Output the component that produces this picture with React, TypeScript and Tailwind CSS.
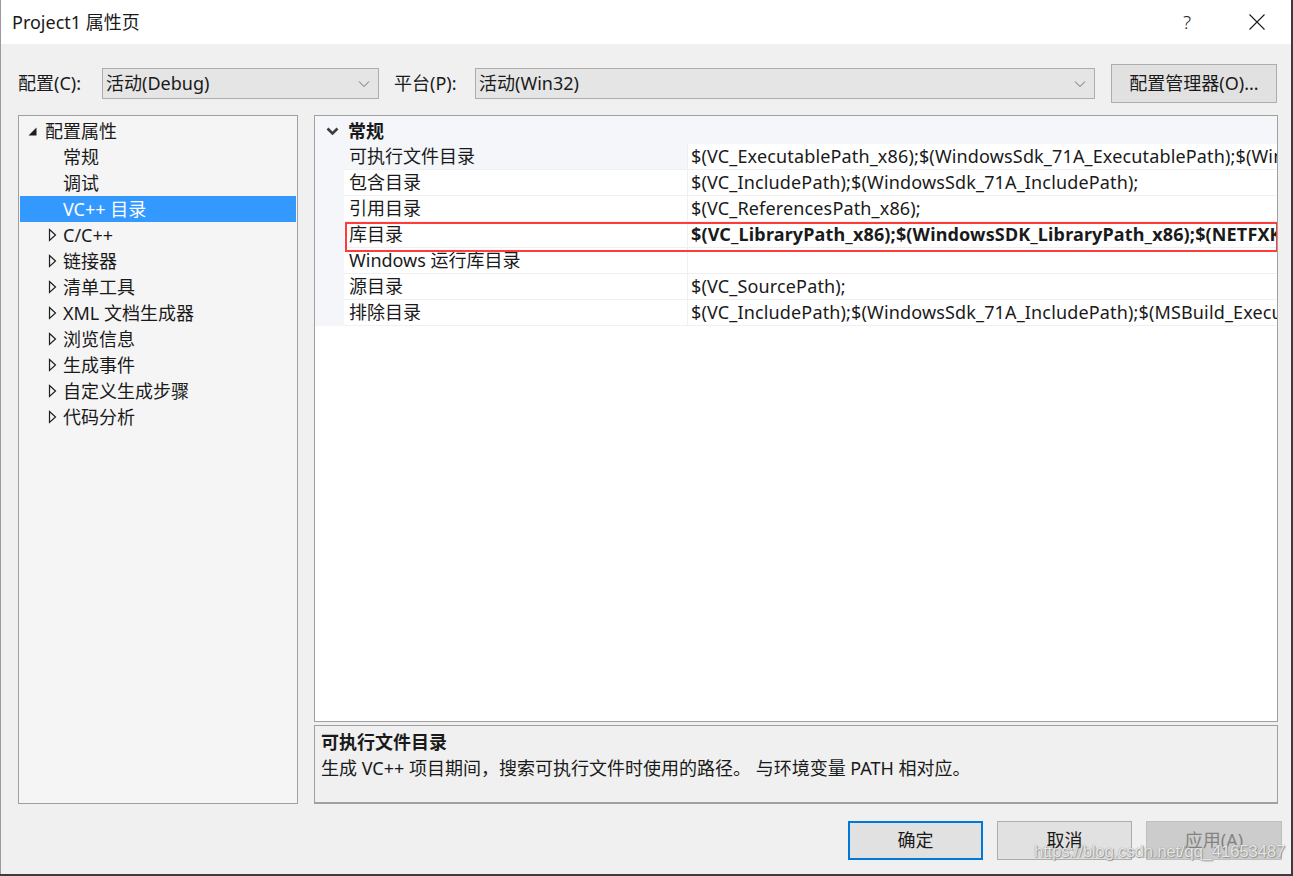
import React from 'react';

const font = { fontFamily: '"Noto Sans", "Noto Sans CJK SC", sans-serif' };

const Chevron = () => (
  <svg width="12" height="8" viewBox="0 0 12 8" className="text-[#6b6b6b]">
    <path d="M1 1.5 L6 6.5 L11 1.5" fill="none" stroke="currentColor" strokeWidth="1" />
  </svg>
);

const Caret = () => (
  <svg width="9" height="14" viewBox="0 0 9 14" className="shrink-0">
    <path d="M1.5 1.5 L7.5 7 L1.5 12.5 Z" fill="none" stroke="#1e1e1e" strokeWidth="1.2" />
  </svg>
);

const treeItems = [
  { label: '常规', caret: false },
  { label: '调试', caret: false },
  { label: 'VC++ 目录', caret: false, active: true },
  { label: 'C/C++', caret: true },
  { label: '链接器', caret: true },
  { label: '清单工具', caret: true },
  { label: 'XML 文档生成器', caret: true },
  { label: '浏览信息', caret: true },
  { label: '生成事件', caret: true },
  { label: '自定义生成步骤', caret: true },
  { label: '代码分析', caret: true },
];

const rows = [
  { name: '可执行文件目录', value: '$(VC_ExecutablePath_x86);$(WindowsSdk_71A_ExecutablePath);$(WindowsSdk_71A_ExecutablePath_x64);$(WindowsSDK_ExecutablePath);$(VS_ExecutablePath);$(MSBuild_ExecutablePath);$(SystemRoot)', selected: true },
  { name: '包含目录', value: '$(VC_IncludePath);$(WindowsSdk_71A_IncludePath);' },
  { name: '引用目录', value: '$(VC_ReferencesPath_x86);' },
  { name: '库目录', value: '$(VC_LibraryPath_x86);$(WindowsSDK_LibraryPath_x86);$(NETFXKitsDir)Lib\\um\\x86', bold: true },
  { name: 'Windows 运行库目录', value: '' },
  { name: '源目录', value: '$(VC_SourcePath);' },
  { name: '排除目录', value: '$(VC_IncludePath);$(WindowsSdk_71A_IncludePath);$(MSBuild_ExecutablePath);$(VC_LibraryPath_x86);' },
];

export default function App() {
  return (
    <div className="w-[1293px] h-[876px] bg-[#3c3c3c] overflow-hidden text-[#1a1a1a]" style={font}>
      <div className="relative w-[1291px] h-[874px] bg-[#f0f0f0] border-l border-[#9a9a9a] flex flex-col">
        {/* title bar */}
        <div className="h-[44px] bg-white flex items-center pl-[11px] shrink-0">
          <span className="text-[18px] flex-1">Project1 属性页</span>
          <span className="text-[19px] text-[#222] w-[20px] mr-[46px] font-light">?</span>
          <svg width="16" height="16" viewBox="0 0 16 16" className="mr-[26px]">
            <path d="M0.5 0.5 L15.5 15.5 M15.5 0.5 L0.5 15.5" stroke="#1a1a1a" strokeWidth="1.1" />
          </svg>
        </div>

        {/* config row */}
        <div className="flex items-center h-[39px] mt-[20px] pl-[17px] shrink-0 text-[18px]">
          <span className="w-[84px]">配置(C):</span>
          <div className="w-[277px] h-[31px] bg-[#e5e5e5] border border-[#adadad] flex items-center px-[3px]">
            <span className="flex-1">活动(Debug)</span>
            <span className="mr-[5px]"><Chevron /></span>
          </div>
          <span className="ml-[15px] w-[81px]">平台(P):</span>
          <div className="w-[620px] h-[31px] bg-[#e5e5e5] border border-[#adadad] flex items-center px-[3px]">
            <span className="flex-1">活动(Win32)</span>
            <span className="mr-[5px]"><Chevron /></span>
          </div>
          <div className="ml-[16px] w-[166px] h-[39px] bg-[#e1e1e1] border border-[#adadad] flex items-center justify-center">
            配置管理器(O)...
          </div>
        </div>

        {/* main */}
        <div className="flex mt-[12px] pl-[17px] h-[689px] shrink-0 text-[18px]">
          <div className="w-[280px] h-full bg-[#f5f5f5] border border-[#a0a0a0] pt-[2px] px-[1px]">
            <div className="h-[26px] flex items-center pl-[8px]">
              <svg width="9" height="9" viewBox="0 0 9 9" className="mr-[8px]">
                <path d="M8.5 0.5 L8.5 8.5 L0.5 8.5 Z" fill="#1e1e1e" />
              </svg>
              <span>配置属性</span>
            </div>
            {treeItems.map((t) => (
              <div
                key={t.label}
                className={`h-[26px] flex items-center pl-[28px] ${t.active ? 'bg-[#3399ff] text-white' : ''}`}
              >
                <span className="w-[15px] flex items-center">{t.caret && <Caret />}</span>
                <span>{t.label}</span>
              </div>
            ))}
          </div>

          <div className="ml-[16px] w-[964px] flex flex-col">
            <div className="relative h-[608px] bg-white border border-[#a0a0a0] overflow-hidden">
              <div className="h-[28px] bg-[#f4f6fa] flex items-center pt-[3px]">
                <span className="w-[33px] flex justify-center pl-[2px]">
                  <svg width="13" height="9" viewBox="0 0 13 9">
                    <path d="M1.5 1.5 L6.5 6.5 L11.5 1.5" fill="none" stroke="#3c3c3c" strokeWidth="2.6" />
                  </svg>
                </span>
                <span className="font-bold">常规</span>
              </div>
              {rows.map((r) => (
                <div key={r.name} className="flex h-[26px]">
                  <div className="w-[29px] bg-[#f4f6fa] shrink-0" />
                  <div
                    className={`w-[343px] shrink-0 flex items-center pl-[5px] border-b border-[#f0f0f0] ${r.selected ? 'bg-[#f4f6fa]' : ''}`}
                  >
                    {r.name}
                  </div>
                  <div
                    className={`flex-1 flex items-center pl-[3px] border-l border-b border-[#f0f0f0] whitespace-nowrap overflow-hidden tracking-[0.15px] ${r.bold ? 'font-bold' : ''}`}
                  >
                    {r.value}
                  </div>
                </div>
              ))}
              <div className="absolute left-[30px] top-[106px] w-[933px] h-[30px] border-[2.5px] border-[#ff3b3b]" />
            </div>
            <div className="mt-[3px] h-[79px] bg-[#f0f0f0] border border-[#a0a0a0] border-b-2 px-[6px] pt-[3px]">
              <div className="font-bold h-[26px] leading-[26px]">可执行文件目录</div>
              <div className="h-[26px] leading-[26px]">生成 VC++ 项目期间，搜索可执行文件时使用的路径。 与环境变量 PATH 相对应。</div>
            </div>
          </div>
        </div>

        {/* buttons */}
        <div className="flex mt-[17px] pl-[847px] gap-[14px] text-[18px]">
          <div className="w-[135px] h-[39px] bg-[#e1e1e1] border-2 border-[#0078d7] flex items-center justify-center">确定</div>
          <div className="w-[135px] h-[39px] bg-[#e1e1e1] border border-[#adadad] flex items-center justify-center">取消</div>
          <div className="w-[136px] h-[39px] bg-[#cccccc] border border-[#bfbfbf] flex items-center justify-center text-[#838383]">应用(A)</div>
        </div>

        <div
          className="absolute right-[6px] bottom-[10px] text-[17px] text-white/80 tracking-[-0.3px]"
          style={{ fontFamily: '"Liberation Sans", Arial, sans-serif', textShadow: '0 0 1px #777, 1px 1px 1px #999' }}
        >
          https://blog.csdn.net/qq_41653487
        </div>
      </div>
    </div>
  );
}
